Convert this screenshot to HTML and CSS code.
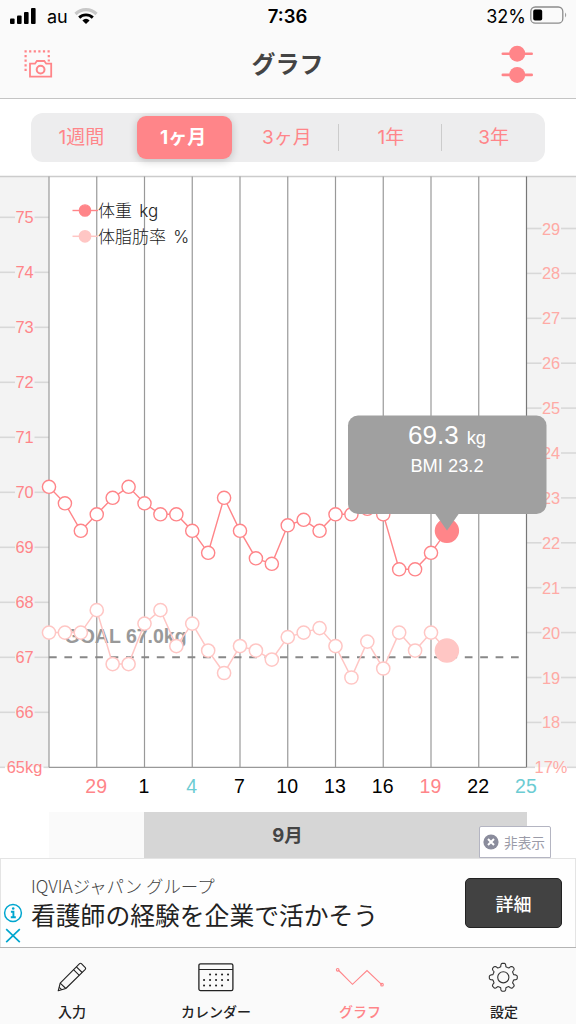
FILE: index.html
```html
<!DOCTYPE html>
<html lang="ja">
<head>
    <meta charset="UTF-8">
    <meta name="viewport" content="width=device-width, initial-scale=1.0">
    <title>グラフ</title>
    <link rel="stylesheet" href="styles.css">
</head>
<body>

    <header class="header">
        <div class="status-bar">
            <div class="status-left">
                <svg class="signal" width="26" height="17" viewBox="0 0 26 17">
                    <rect x="0" y="10.5" width="4.6" height="5.6" rx="1"/>
                    <rect x="7" y="7.5" width="4.6" height="8.6" rx="1"/>
                    <rect x="14" y="4" width="4.6" height="12.1" rx="1"/>
                    <rect x="21" y="0" width="4.6" height="16.1" rx="1"/>
                </svg>
                <span class="carrier">au</span>
                <svg class="wifi" width="24" height="18" viewBox="0 0 24 18">
                    <path d="M1.5 7A15 15 0 0 1 22.5 7" fill="none" stroke="#c8c8c8" stroke-width="3.2"/>
                    <path d="M5.2 10.6A9.8 9.8 0 0 1 18.8 10.6" fill="none" stroke="#000" stroke-width="2.9"/>
                    <path d="M8.4 13.4A5 5 0 0 1 15.6 13.4L12 17Z"/>
                </svg>
            </div>
            <span class="time">7:36</span>
            <div class="status-right">
                <span class="percent">32%</span>
                <svg width="37" height="18" viewBox="0 0 37 18">
                    <rect x="0.8" y="0" width="32" height="16.2" rx="4.5" fill="none" stroke="#8c8c8c" stroke-width="1.3"/>
                    <rect x="3.2" y="2.6" width="9" height="11" rx="1.8"/>
                    <path d="M35.2 5.5Q37.2 8 35.2 10.5Z" fill="#8c8c8c"/>
                </svg>
            </div>
        </div>
        <div class="nav-bar">
            <svg width="30" height="30" viewBox="0 0 30 30" fill="none" stroke="#ff8589">
                <path d="M0.5 1.4H26" stroke-width="2.2" stroke-dasharray="2.2 2.4"/>
                <path d="M1.6 5V22.6M24.8 5V11.4" stroke-width="2.2" stroke-dasharray="2.2 2.4"/>
                <path d="M6 13.7H11L12.9 11H20.3L22.2 13.7H27.2V26.6H6Z" stroke-width="1.8"/>
                <circle cx="16.6" cy="19.6" r="3.9" stroke-width="2"/>
            </svg>
            <h1>グラフ</h1>
            <svg width="32" height="40" viewBox="0 0 32 40" fill="#ff8589">
                <rect x="0.5" y="7.4" width="31.5" height="2.6" rx="1.3"/>
                <rect x="0.5" y="28.6" width="31.5" height="2.6" rx="1.3"/>
                <circle cx="16.2" cy="8.7" r="8"/>
                <circle cx="16.2" cy="29.9" r="8"/>
            </svg>
        </div>
    </header>

    <div class="period-wrap">
        <div class="period">
            <button>1週間</button>
            <button class="active">1ヶ月</button>
            <button>3ヶ月</button>
            <button class="divided">1年</button>
            <button class="divided">3年</button>
        </div>
    </div>

    <svg id="chart" class="chart" width="576" height="636" viewBox="0 176 576 636"></svg>

    <div class="months">
        <div class="month prev"></div>
        <div class="month current">9月</div>
        <button class="hide-ad">
            <svg width="16" height="16" viewBox="0 0 16 16">
                <circle cx="8" cy="8" r="7.6" fill="#8a8c9c"/>
                <path d="M5 5L11 11M11 5L5 11" stroke="#fff" stroke-width="2"/>
            </svg>
            非表示
        </button>
    </div>

    <section class="ad">
        <div class="ad-marks">
            <svg width="20" height="20" viewBox="0 0 20 20">
                <circle cx="10" cy="10" r="8.4" fill="none" stroke="#00a6cf" stroke-width="1.5"/>
                <path d="M7.9 8.7H10.4V14M7.8 14.2H12.8" fill="none" stroke="#00a6cf" stroke-width="1.9"/>
                <circle cx="10.2" cy="5.5" r="1.3" fill="#00a6cf"/>
            </svg>
            <svg width="20" height="20" viewBox="0 0 20 20">
                <path d="M3.2 3.2L16.8 16.2M16.8 3.2L3.2 16.2" stroke="#00a6cf" stroke-width="1.7"/>
            </svg>
        </div>
        <div class="ad-text">
            <p class="ad-sponsor">IQVIAジャパン グループ</p>
            <p class="ad-title">看護師の経験を企業で活かそう</p>
        </div>
        <button class="ad-btn">詳細</button>
    </section>

    <nav class="tab-bar">
        <a class="tab">
            <svg width="32" height="32" viewBox="0 0 32 32" fill="none" stroke="#222" stroke-width="1.1" stroke-linejoin="round">
                <path d="M2.2 29.8L4.2 22.2L23.6 2.6Q24.5 1.8 25.4 2.6L29.3 6.6Q30 7.5 29.3 8.3L9.8 27.5Z"/>
                <path d="M4.2 22.2L9.8 27.5M17.5 8.7L23.3 14.4M20.4 5.8L26.2 11.5M3.2 26.3L5.7 28.7"/>
            </svg>
            <span>入力</span>
        </a>
        <a class="tab">
            <svg width="36" height="32" viewBox="0 0 36 32">
                <rect x="0.9" y="2.8" width="34" height="26.8" rx="1.6" fill="none" stroke="#222" stroke-width="1.3"/>
                <path d="M1 8.5H35" stroke="#222" stroke-width="1.2"/>
                <path d="M12 13.5H31.4M6 19H31.4M6 24.5H26" stroke="#222" stroke-width="2" stroke-dasharray="0.1 5.9" stroke-linecap="round"/>
            </svg>
            <span>カレンダー</span>
        </a>
        <a class="tab active">
            <svg width="48" height="32" viewBox="0 0 48 32" fill="none" stroke="#ff8589" stroke-width="1.1">
                <path d="M2.2 9L16.5 23.3L31 9.5L45.8 23.7"/>
                <circle cx="1.7" cy="8.8" r="1.3"/>
                <circle cx="46" cy="23.7" r="1.3"/>
            </svg>
            <span>グラフ</span>
        </a>
        <a class="tab">
            <svg width="32" height="32" viewBox="0 0 32 32" fill="none" stroke="#333" stroke-width="1.1" stroke-linejoin="round">
                <path id="gear"/>
                <circle cx="15.3" cy="16.3" r="5.6"/>
            </svg>
            <span>設定</span>
        </a>
    </nav>

    <script>
        const weights = [70.1, 69.8, 69.3, 69.6, 69.9, 70.1, 69.8, 69.6, 69.6, 69.3, 68.9, 69.9, 69.3,
            68.8, 68.7, 69.4, 69.5, 69.3, 69.6, 69.6, 69.7, 69.6, 68.6, 68.6, 68.9, 69.3];
        const fats = [20, 20, 20, 20.5, 19.3, 19.3, 20.2, 20.5, 19.7, 20.2, 19.6, 19.1, 19.7,
            19.6, 19.4, 19.9, 20, 20.1, 19.7, 19, 19.8, 19.2, 20, 19.6, 20, 19.6];
        const days = [29, 1, 4, 7, 10, 13, 16, 19, 22, 25];

        const plotLeft = 49;
        const plotRight = 526.5;
        const plotTop = 176.5;
        const plotBottom = 767.3;
        const x = i => plotLeft + i * (plotRight - plotLeft) / 30;
        const yKg = v => plotBottom - (v - 65) * 55;
        const yFat = v => plotBottom - (v - 17) * 44.9;

        let svg = '';
        const line = (cls, x1, y1, x2, y2) => {
            svg += `<line class="${cls}" x1="${x1}" y1="${y1}" x2="${x2}" y2="${y2}"/>`;
        };
        const text = (cls, tx, ty, str) => {
            svg += `<text class="${cls}" x="${tx}" y="${ty}">${str}</text>`;
        };

        // Side bands
        svg += `<rect class="band" x="0" y="${plotTop}" width="${plotLeft}" height="${plotBottom - plotTop}"/>`;
        svg += `<rect class="band" x="${plotRight}" y="${plotTop}" width="${576 - plotRight}" height="${plotBottom - plotTop}"/>`;

        // Left axis (kg)
        for (let v = 65; v <= 75; v++) {
            const gap = v === 65 ? [5, 43.5] : [15, 34.5];
            line('tick', 0, yKg(v), gap[0], yKg(v));
            line('tick', gap[1], yKg(v), plotLeft, yKg(v));
            text('axis', 24.5, yKg(v) + 6, v === 65 ? '65kg' : v);
        }

        // Right axis (%)
        for (let v = 17; v <= 29; v++) {
            const gap = v === 17 ? [535, 567] : [541.5, 561];
            line('tick', plotRight, yFat(v), gap[0], yFat(v));
            line('tick', gap[1], yFat(v), 576, yFat(v));
            text('axis fat', 551, yFat(v) + 6, v === 17 ? '17%' : v);
        }

        // Grid and day labels
        line('frame', 0, plotTop, 576, plotTop);
        for (let i = 0; i <= 10; i++) {
            line(i === 10 ? 'grid last' : 'grid', x(i * 3), plotTop, x(i * 3), plotBottom);
            if (i > 0) {
                const day = days[i - 1];
                const color = day === 29 || day === 19 ? ' sunday' : day === 4 || day === 25 ? ' saturday' : '';
                text('day' + color, x(i * 3) - 0.6, 793, day);
            }
        }
        line('grid', plotLeft, plotBottom, plotRight, plotBottom);

        // Goal
        line('goal', plotLeft, yKg(67), plotRight, yKg(67));
        text('goal-text', 64.5, 643, 'GOAL 67.0kg');

        // Series
        function series(cls, values, y) {
            svg += `<polyline class="${cls}" points="${values.map((v, i) => x(i) + ',' + y(v)).join(' ')}"/>`;
            values.forEach((v, i) => {
                const last = i === values.length - 1;
                svg += `<circle class="${cls}${last ? ' selected' : ''}" cx="${x(i)}" cy="${y(v)}" r="${last ? 11.5 : 6.6}"/>`;
            });
        }
        series('fat-line', fats, yFat);
        series('kg-line', weights, yKg);

        // Legend
        line('kg-line', 72.5, 210.5, 98, 210.5);
        svg += '<circle class="kg-line selected" cx="85" cy="210.5" r="5.6"/>';
        text('legend', 98, 217, '体重 kg');
        line('fat-line', 72.5, 236.3, 98, 236.3);
        svg += '<circle class="fat-line selected" cx="85" cy="236.3" r="5.6"/>';
        text('legend', 98, 242.5, '体脂肪率 %');

        // Tooltip
        svg += '<rect class="tip" x="348" y="415.5" width="198.5" height="98.5" rx="10"/>';
        svg += '<path class="tip" d="M435 513.5H459L447 530.5Z"/>';
        svg += '<text class="tip-text value" x="447" y="443.5"><tspan class="big">69.3</tspan> kg</text>';
        text('tip-text', 447, 472.3, 'BMI 23.2');

        document.getElementById('chart').innerHTML = svg;

        // Gear outline, 8 rounded teeth
        let gear = '';
        for (let i = 0; i < 8; i++) {
            [[-14, 10.8], [-11, 12.6], [-8, 13.6], [-4, 14], [4, 14], [8, 13.6], [11, 12.6], [14, 10.8], [22.5, 10.6]].forEach((p, j) => {
                const a = (i * 45 + p[0]) * Math.PI / 180;
                gear += (i || j ? 'L' : 'M') + (15.3 + p[1] * Math.sin(a)).toFixed(2) + ' ' + (16.3 - p[1] * Math.cos(a)).toFixed(2);
            });
        }
        document.getElementById('gear').setAttribute('d', gear + 'Z');
    </script>
</body>
</html>
```
FILE: styles.css
```css
* {
    box-sizing: border-box;
}

body {
    margin: 0;
    width: 576px;
    height: 1024px;
    overflow: hidden;
    background-color: #fff;
    font-family: Inter, "Noto Sans CJK JP", sans-serif;
}

button {
    padding: 0;
    border: none;
    background: none;
    font-family: inherit;
}

svg {
    display: block;
    overflow: visible;
}

.header {
    height: 99px;
    background-color: #fafafa;
    border-bottom: 1px solid #c4c4c4;
}

.status-bar {
    height: 32px;
    padding: 0 9px 0 10px;
    display: grid;
    grid-template-columns: 1fr auto 1fr;
    align-items: center;
}

.status-left,
.status-right {
    display: flex;
    align-items: center;
    font-size: 18px;
}

.status-left .carrier {
    margin: 0 6px 0 11px;
}

.status-right {
    justify-content: flex-end;
    gap: 4px;
}

.time {
    margin-right: 2px;
    font-size: 18.5px;
    font-weight: 600;
}

.nav-bar {
    height: 66px;
    padding: 0 43px 0 24px;
    display: grid;
    grid-template-columns: 1fr auto 1fr;
    align-items: center;
}

.nav-bar h1 {
    margin: 0 0 0 18px;
    font-size: 24px;
    font-weight: 700;
    line-height: 30px;
    color: #444;
}

.nav-bar svg:last-child {
    justify-self: end;
}

/* Period switch */
.period-wrap {
    height: 77px;
    padding: 14px 31px 0;
}

.period {
    height: 49px;
    border-radius: 12px;
    background-color: #ededee;
    display: grid;
    grid-template-columns: repeat(5, 1fr);
    align-items: center;
}

.period button {
    height: 27px;
    padding: 1px 2px 0 0;
    font-size: 19px;
    line-height: 26px;
    color: #ff8589;
}

.period .active {
    height: 43px;
    margin: 0 5px 0 3px;
    border-radius: 9px;
    background-color: #ff8589;
    color: #fff;
    font-weight: 700;
    box-shadow: 0 2px 8px rgba(0, 0, 0, 0.2);
}

.period .divided {
    margin-left: -1px;
    padding-right: 0;
    border-left: 1px solid #ccc;
}

/* Chart */
.chart text {
    font-family: "Liberation Sans", "Noto Sans CJK JP", sans-serif;
}

.chart .band {
    fill: #f3f3f3;
}

.chart .tick {
    stroke: #d8d8d8;
    stroke-width: 1.6;
}

.chart .frame {
    stroke: #ccc;
    stroke-width: 1.3;
}

.chart .grid {
    stroke: #999;
    stroke-width: 1.2;
}

.chart .grid.last {
    stroke: #777;
}

.chart .axis {
    font-size: 16.4px;
    fill: #ff8589;
    text-anchor: middle;
}

.chart .axis.fat {
    fill: #ffaaa5;
}

.chart .day {
    font-size: 19.5px;
    text-anchor: middle;
}

.chart .sunday {
    fill: #ff8589;
}

.chart .saturday {
    fill: #6cccd3;
}

.chart .goal {
    stroke: #888;
    stroke-width: 2;
    stroke-dasharray: 7.7 7.7;
}

.chart .goal-text {
    font-size: 19.5px;
    font-weight: 700;
    fill: #999;
}

.kg-line {
    fill: #fff;
    stroke: #ff8589;
    stroke-width: 1.4;
}

.fat-line {
    fill: #fff;
    stroke: #ffc6c4;
    stroke-width: 1.5;
}

polyline.kg-line,
polyline.fat-line {
    fill: none;
}

.kg-line.selected {
    fill: #ff8589;
}

.fat-line.selected {
    fill: #ffc6c4;
}

.chart .legend {
    font-family: Inter, "Noto Sans CJK JP", sans-serif;
    font-size: 17px;
    font-weight: 300;
    word-spacing: 2.5px;
    fill: #222;
}

.chart .tip {
    fill: #a0a0a0;
}

.chart .tip-text {
    font-size: 18.3px;
    fill: #fff;
    text-anchor: middle;
}

.chart .tip-text.value {
    word-spacing: 3px;
}

.chart .tip-text .big {
    font-size: 26px;
}

/* Month strip */
.months {
    position: relative;
    height: 46px;
    padding-left: 49px;
    display: flex;
}

.month.prev {
    width: 95px;
    background-color: #fafafa;
}

.month.current {
    width: 383px;
    padding-right: 96px;
    background-color: #d6d6d6;
    font-size: 18.5px;
    font-weight: 700;
    line-height: 46px;
    text-align: center;
    color: #444;
}

.hide-ad {
    position: absolute;
    right: 25px;
    bottom: 0;
    width: 72px;
    height: 32px;
    border: 1px solid #b4b5c2;
    border-radius: 2px 2px 0 0;
    background-color: #fff;
    display: flex;
    align-items: center;
    justify-content: center;
    gap: 5px;
    padding-right: 2px;
    font-size: 13.7px;
    color: #9a9ba8;
}

/* Ad banner */
.ad {
    height: 89px;
    padding: 0 13px 0 2px;
    border: 1px solid #e4e4e4;
    border-width: 1px 1px 0;
    background-color: #fefefe;
    display: flex;
    align-items: center;
}

.ad-marks {
    width: 28px;
    padding-top: 43px;
    display: flex;
    flex-direction: column;
    gap: 3px;
}

.ad-text {
    flex: 1;
    font-family: "Noto Sans CJK JP", sans-serif;
}

.ad-text p {
    margin: 0;
    white-space: nowrap;
}

.ad-sponsor {
    font-size: 17.4px;
    line-height: 22px;
    font-weight: 300;
    color: #444;
}

.ad-title {
    font-size: 24.8px;
    line-height: 34px;
    color: #222;
}

.ad-btn {
    width: 97px;
    height: 50px;
    border: 1px solid #222;
    border-radius: 5px;
    background-color: #424242;
    color: #fff;
    font-size: 18px;
    font-weight: 500;
}

/* Tab bar */
.tab-bar {
    height: 77px;
    padding-top: 13px;
    border-top: 1px solid #b4b4b4;
    background-color: #fafafa;
    display: grid;
    grid-template-columns: repeat(4, 144px);
}

.tab {
    display: flex;
    flex-direction: column;
    align-items: center;
    gap: 9px;
    font-size: 14px;
    font-weight: 500;
    line-height: 20px;
    color: #222;
}

.tab.active {
    color: #ff8589;
}
```
